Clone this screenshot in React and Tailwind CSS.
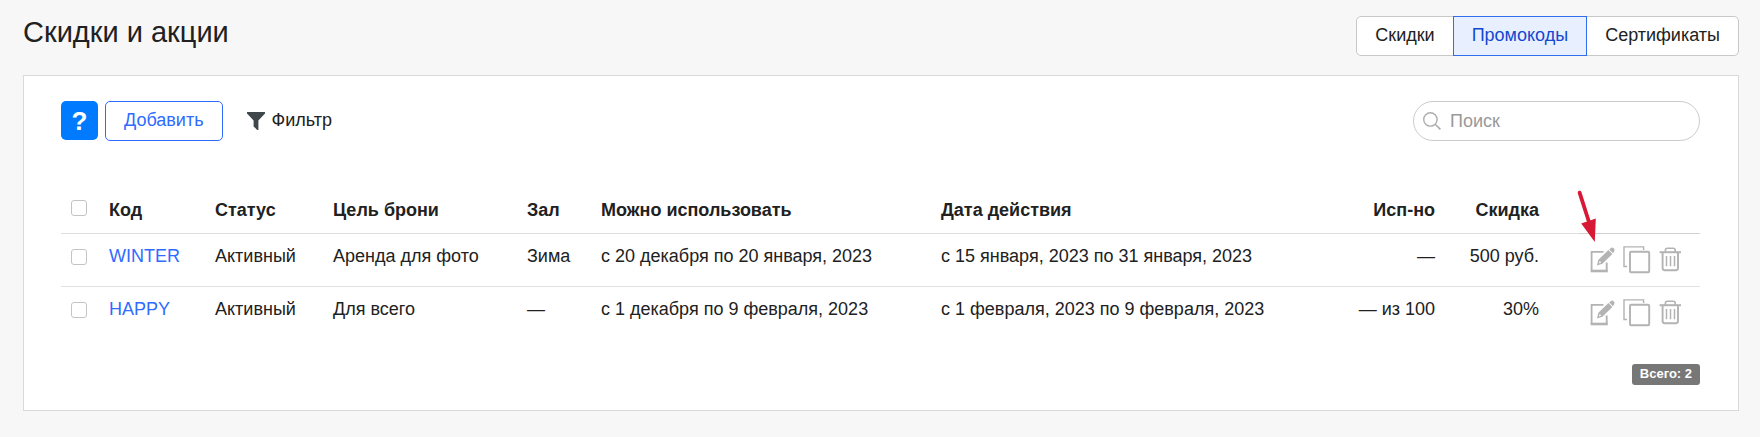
import React from "react";

const promocodes = [
  {
    code: "WINTER",
    status: "Активный",
    goal: "Аренда для фото",
    hall: "Зима",
    usable: "с 20 декабря по 20 января, 2023",
    dates: "с 15 января, 2023 по 31 января, 2023",
    used: "—",
    discount: "500 руб.",
  },
  {
    code: "HAPPY",
    status: "Активный",
    goal: "Для всего",
    hall: "—",
    usable: "с 1 декабря по 9 февраля, 2023",
    dates: "с 1 февраля, 2023 по 9 февраля, 2023",
    used: "— из 100",
    discount: "30%",
  },
];

function EditIcon() {
  return (
    <svg viewBox="0 0 28 28" className="block size-7" fill="none" stroke="#b3b3b3" aria-hidden="true">
      <path d="M14.5 5.8H2.6V25.2" strokeWidth="1.8" />
      <path d="M1.7 25H18.7" strokeWidth="2.6" />
      <path d="M17.7 25.5V16.5" strokeWidth="1.9" />
      <path d="M7.9 19.4L9.4 13.8L19.4 4L23.4 8L13.4 17.8Z" fill="#b3b3b3" stroke="none" />
      <path d="M9.8 17.6L10.8 15L12.2 16.4Z" fill="#fff" stroke="none" />
      <path d="M20.2 3.4L22 1.9Q23.2 1 24.7 2.2Q26.2 3.8 25.2 5.2L24 7.2Z" fill="#b3b3b3" stroke="none" />
    </svg>
  );
}

function CopyIcon() {
  return (
    <svg viewBox="0 0 28 28" className="block size-7" fill="none" stroke="#b3b3b3" aria-hidden="true">
      <path d="M20.6 4V.9H1V20.5H4" strokeWidth="1.4" />
      <rect x="7" y="5.8" width="19.2" height="20.4" rx="1" strokeWidth="1.9" />
    </svg>
  );
}

function TrashIcon() {
  return (
    <svg viewBox="0 0 28 28" className="block size-7" fill="none" stroke="#b3b3b3" aria-hidden="true">
      <path d="M2.6 6.2H24" strokeWidth="2" />
      <path d="M8.4 6V4.2Q8.4 2.2 10.4 2.2H16.2Q18.2 2.2 18.2 4.2V6" strokeWidth="1.6" />
      <path d="M5.6 6.5V22Q5.6 24.2 7.8 24.2H18.8Q21 24.2 21 22V6.5" strokeWidth="1.9" />
      <path d="M9.5 10V20.2M13.5 10V20.2M17.5 10V20.2" strokeWidth="1.5" />
    </svg>
  );
}

function Checkbox({ label }) {
  return (
    <input
      type="checkbox"
      aria-label={label}
      className="block size-4 appearance-none rounded-[3px] border border-[#c4c4c4] bg-white checked:bg-[#2f6bff]"
    />
  );
}

function Tab({ children, active, className }) {
  return (
    <button
      type="button"
      aria-pressed={active}
      className={
        "h-10 border px-[18px] pb-[2px] " +
        (active
          ? "relative border-[#2f6fed] bg-[#e8efff] text-[#1448d0] "
          : "border-[#c8c8c8] bg-white ") +
        className
      }
    >
      {children}
    </button>
  );
}

const th = "border-b border-[#dfdfdf] px-3 pt-[6px] pb-[9px] font-bold";
const td = "px-3 pt-2 align-top";

export default function App() {
  return (
    <div className="min-h-screen bg-[#f7f7f7] pt-4 pr-[21px] pb-[27px] pl-[23px] font-['Liberation_Sans',Arial,sans-serif] text-[18px] leading-7 text-[#212121]">
      <header className="flex items-start justify-between">
        <h1 className="text-[29px] leading-8">Скидки и акции</h1>
        <div className="flex" role="group" aria-label="Разделы">
          <Tab className="rounded-l-[5px]">Скидки</Tab>
          <Tab active className="-mx-px">Промокоды</Tab>
          <Tab className="rounded-r-[5px]">Сертификаты</Tab>
        </div>
      </header>

      <main className="mt-[19px] border border-[#d9d9d9] bg-white py-[25px] pr-[38px] pl-[37px]">
        <div className="flex items-start justify-between">
          <div className="flex items-start">
            <button
              type="button"
              aria-label="Справка"
              className="h-[39px] w-[37px] rounded-[5px] bg-[#007bff] text-[26px] font-bold text-white"
            >
              ?
            </button>
            <button
              type="button"
              className="ml-[7px] h-10 rounded-[5px] border border-[#2f6bff] bg-white px-[18px] pb-[2px] text-[#2f6bff]"
            >
              Добавить
            </button>
            <button type="button" className="ml-6 flex h-10 items-center gap-[7px] pb-[2px]">
              <svg viewBox="0 0 18 18" className="mt-[2px] size-[18px]" fill="#3f474b" aria-hidden="true">
                <path d="M0 0H18V1.6L11.4 8.6V18H10.2L6.6 14.4V8.6L0 1.6Z" />
              </svg>
              Фильтр
            </button>
          </div>
          <label className="flex h-10 w-[287px] items-center gap-[9px] rounded-full border border-[#cccccc] bg-white px-[9px]">
            <svg viewBox="0 0 18 18" className="size-[18px] shrink-0" fill="none" stroke="#adadad" strokeWidth="1.4" aria-hidden="true">
              <circle cx="7.4" cy="7.4" r="6.7" />
              <path d="M12.2 12.2L17.4 17.4" strokeWidth="1.6" />
            </svg>
            <input
              type="search"
              placeholder="Поиск"
              aria-label="Поиск"
              className="w-full min-w-0 bg-transparent outline-none placeholder:text-[#999999]"
            />
          </label>
        </div>

        <table className="mt-[49px] w-full table-fixed border-separate border-spacing-0 text-left">
          <colgroup>
            <col className="w-9" />
            <col className="w-[106px]" />
            <col className="w-[118px]" />
            <col className="w-[194px]" />
            <col className="w-[74px]" />
            <col className="w-[340px]" />
            <col />
            <col className="w-[112px]" />
            <col className="w-[132px]" />
            <col className="w-[121px]" />
          </colgroup>
          <thead>
            <tr>
              <th className="border-b border-[#dfdfdf] pt-[10px] pl-[10px] align-top">
                <Checkbox label="Выбрать все" />
              </th>
              <th className={th}>Код</th>
              <th className={th}>Статус</th>
              <th className={th}>Цель брони</th>
              <th className={th}>Зал</th>
              <th className={th}>Можно использовать</th>
              <th className={th}>Дата действия</th>
              <th className={th + " text-right"}>Исп-но</th>
              <th className="border-b border-[#dfdfdf] pt-[6px] pr-10 pb-[9px] text-right font-bold">Скидка</th>
              <th className="relative border-b border-[#d2d2d2]" aria-label="Действия">
                <svg viewBox="0 0 20 54" className="absolute top-0 left-[-2px] h-[54px] w-5" aria-hidden="true">
                  <path d="M2.6 2.6L12 32" stroke="#d71935" strokeWidth="3.8" strokeLinecap="round" />
                  <path d="M4.2 33.6L18.8 28.6L17.8 52Z" fill="#d71935" />
                </svg>
              </th>
            </tr>
          </thead>
          <tbody className="[&>tr:first-child>td]:border-b [&>tr:first-child>td]:border-[#e2e2e2]">
            {promocodes.map((p) => (
              <tr key={p.code} className="h-[53px]">
                <td className="pt-[15px] pl-[10px] align-top">
                  <Checkbox label={"Выбрать " + p.code} />
                </td>
                <td className={td}>
                  <a href="#" className="text-[#2f6bff]">{p.code}</a>
                </td>
                <td className={td}>{p.status}</td>
                <td className={td}>{p.goal}</td>
                <td className={td}>{p.hall}</td>
                <td className={td}>{p.usable}</td>
                <td className={td}>{p.dates}</td>
                <td className={td + " text-right"}>{p.used}</td>
                <td className="pt-2 pr-10 text-right align-top">{p.discount}</td>
                <td className="pt-3 pl-[10px] align-top">
                  <div className="flex gap-[6px]">
                    <button type="button" aria-label="Редактировать"><EditIcon /></button>
                    <button type="button" aria-label="Копировать"><CopyIcon /></button>
                    <button type="button" aria-label="Удалить"><TrashIcon /></button>
                  </div>
                </td>
              </tr>
            ))}
          </tbody>
        </table>

        <div className="mt-6 flex justify-end">
          <span className="h-[21px] rounded-[3px] bg-[#777777] px-2 text-[13px] leading-5 font-bold text-white">Всего: 2</span>
        </div>
      </main>
    </div>
  );
}
